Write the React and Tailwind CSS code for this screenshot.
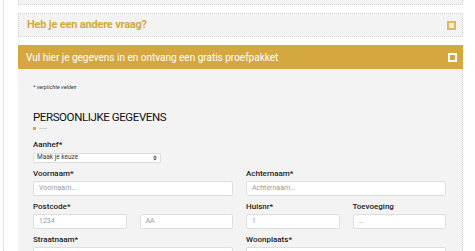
const Field = ({ label, placeholder, className = "" }) => (
  <div className={`flex flex-col ${className}`}>
    <label className="text-[8px] font-medium text-[#222] leading-[10px] h-[10px]">{label}</label>
    <div className="mt-[2px] h-[15px] bg-white border border-[#dedede] rounded-[2px] flex items-center px-[5px] text-[7px] text-[#999]">
      {placeholder}
    </div>
  </div>
);

const Square = ({ light }) => (
  <span
    className={`block w-[9px] h-[9px] border-2 ${
      light ? "border-[#dcb766] bg-[#f6ecd6]" : "border-white"
    }`}
  />
);

export default function App() {
  return (
    <div
      className="w-[475px] h-[251px] overflow-hidden bg-white"
      style={{ fontFamily: "Roboto, 'Liberation Sans', sans-serif" }}
    >
      <div className="ml-[3px] h-full border-l border-dotted border-[#cfcfcf] pl-[14px]">
        <div className="w-[445px]">
          {/* previous panel (cut off) */}
          <div className="h-[5px] bg-[#f3f3f3] border-x border-b border-dotted border-[#d2d2d2]" />

          {/* collapsed panel */}
          <div className="mt-[8px] h-[24px] bg-[#f3f3f3] border border-dotted border-[#d2d2d2] flex items-center justify-between pl-[8px] pr-[6px]">
            <span className="text-[11px] font-bold text-[#d5a841] tracking-[-0.2px]">Heb je een andere vraag?</span>
            <Square light />
          </div>

          {/* open panel */}
          <div className="mt-[8px] h-[24px] bg-[#d5a741] flex items-center justify-between pl-[8px] pr-[6px]">
            <span className="text-[10px] text-white">Vul hier je gegevens in en ontvang een gratis proefpakket</span>
            <Square />
          </div>

          <div className="bg-[#f3f3f3] border-r border-dotted border-[#d2d2d2] pl-[15px] pr-[15px] pt-[15px] h-[200px]">
            <p className="text-[5.5px] italic text-[#333] leading-[6px]">* verplichte velden</p>
            <h2 className="mt-[20px] text-[11.5px] leading-[14px] text-[#111] tracking-[-0.4px]">PERSOONLIJKE GEGEVENS</h2>
            <div className="mt-[3px] flex items-center gap-[3px]">
              <span className="w-[3px] h-[3px] bg-[#d5a741]" />
              <span className="w-[8px] h-px bg-[#cfcfcf]" />
            </div>

            <label className="block mt-[10px] text-[8px] font-medium text-[#222] leading-[10px]">Aanhef*</label>
            <div className="mt-[3px] w-[128px] h-[10px] bg-white border border-[#dcdcdc] rounded-[2px] flex items-center justify-between px-[3px] text-[6.5px] text-[#333]">
              <span>Maak je keuze</span>
              <svg width="4" height="6" viewBox="0 0 4 6">
                <path d="M0 2.5L2 0.5L4 2.5Z M0 3.5L2 5.5L4 3.5Z" fill="#555" />
              </svg>
            </div>

            <div className="mt-[6px] grid grid-cols-2 gap-x-[13px] gap-y-[6px] w-[413px]">
              <Field label="Voornaam*" placeholder="Voornaam..." />
              <Field label="Achternaam*" placeholder="Achternaam..." />
              <div className="grid grid-cols-2 gap-x-[13px]">
                <Field label="Postcode*" placeholder="1234" />
                <Field label={"\u00a0"} placeholder="AA" />
              </div>
              <div className="grid grid-cols-2 gap-x-[13px]">
                <Field label="Huisnr*" placeholder="1" />
                <Field label="Toevoeging" placeholder="..." />
              </div>
              <Field label="Straatnaam*" placeholder="" />
              <Field label="Woonplaats*" placeholder="" />
            </div>
          </div>
        </div>
      </div>
    </div>
  );
}
